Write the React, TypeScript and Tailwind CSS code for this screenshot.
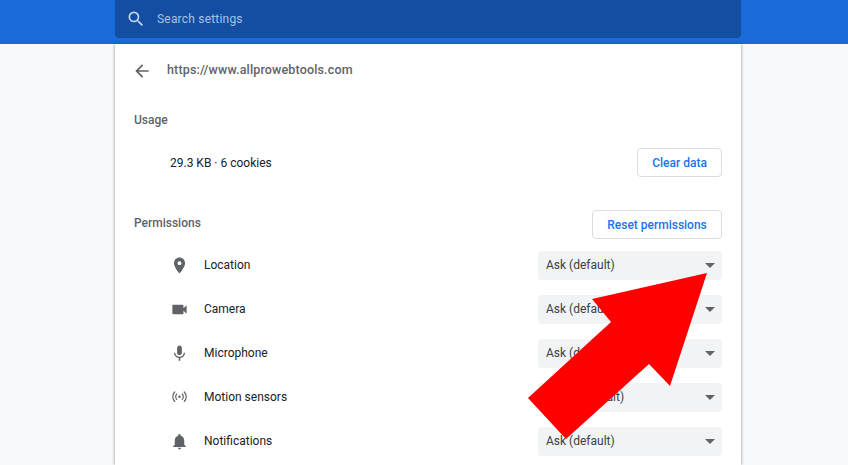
import type { ReactNode } from "react";

const rows: { label: string; value: string; icon: ReactNode }[] = [
  {
    label: "Location",
    value: "Ask (default)",
    icon: <path d="M12 2C8.13 2 5 5.13 5 9c0 5.25 7 13 7 13s7-7.75 7-13c0-3.87-3.13-7-7-7zm0 9.5a2.5 2.5 0 0 1 0-5 2.5 2.5 0 0 1 0 5z" />,
  },
  {
    label: "Camera",
    value: "Ask (default)",
    icon: <path d="M17 10.5V7c0-.55-.45-1-1-1H4c-.55 0-1 .45-1 1v10c0 .55.45 1 1 1h12c.55 0 1-.45 1-1v-3.5l4 4v-11l-4 4z" />,
  },
  {
    label: "Microphone",
    value: "Ask (default)",
    icon: <path d="M12 14c1.66 0 2.99-1.34 2.99-3L15 5c0-1.66-1.34-3-3-3S9 3.34 9 5v6c0 1.66 1.34 3 3 3zm5.3-3c0 3-2.54 5.1-5.3 5.1S6.7 14 6.7 11H5c0 3.41 2.72 6.23 6 6.72V21h2v-3.28c3.28-.48 6-3.3 6-6.72h-1.7z" />,
  },
  {
    label: "Motion sensors",
    value: "Allow (default)",
    icon: (
      <g fill="none" stroke="currentColor" strokeWidth="1.5" strokeLinecap="round">
        <circle cx="12" cy="11" r="1.6" fill="currentColor" stroke="none" />
        <path d="M8.6 7.6a4.8 4.8 0 0 0 0 6.8M15.4 7.6a4.8 4.8 0 0 1 0 6.8" />
        <path d="M6 5a8.5 8.5 0 0 0 0 12M18 5a8.5 8.5 0 0 1 0 12" />
      </g>
    ),
  },
  {
    label: "Notifications",
    value: "Ask (default)",
    icon: <path d="M12 22c1.1 0 2-.9 2-2h-4c0 1.1.89 2 2 2zm6-6v-5c0-3.07-1.64-5.64-4.5-6.32V4c0-.83-.67-1.5-1.5-1.5s-1.5.67-1.5 1.5v.68C7.63 5.36 6 7.92 6 11v5l-2 2v1h16v-1l-2-2z" />,
  },
];

function OutlineButton({ children, width }: { children: ReactNode; width: string }) {
  return (
    <button className={`${width} h-[29px] rounded border border-[#dadce0] bg-white text-[12px] font-medium text-[#1a73e8]`}>
      {children}
    </button>
  );
}

function PermissionRow({ label, value, icon }: { label: string; value: string; icon: ReactNode }) {
  return (
    <div className="flex h-[44px] items-center pl-[36px]">
      <svg viewBox="0 0 24 24" fill="currentColor" className="h-[19px] w-[19px] text-[#5f6368]">
        {icon}
      </svg>
      <span className="ml-[15px] flex-1 text-[12px] text-[#202124]">{label}</span>
      <div className="flex h-[29px] w-[184px] items-center justify-between rounded bg-[#f1f3f4] pl-[8px] pr-[6px] text-[12px] text-[#3c4043]">
        {value}
        <span className="mr-[1px] h-0 w-0 border-x-[5px] border-t-[5px] border-x-transparent border-t-[#5f6368]" />
      </div>
    </div>
  );
}

export default function App() {
  return (
    <div className="relative h-[465px] w-[848px] overflow-hidden bg-[#f8f9fa] font-['Roboto',sans-serif]">
      <header className="h-[44px] bg-[#1a6ad9] pl-[115px]">
        <div className="flex h-[38px] w-[626px] items-center rounded-b-sm bg-[#144ea3] pl-[11px]">
          <svg viewBox="0 0 24 24" fill="currentColor" className="h-[20px] w-[20px] text-[#c5d6f0]">
            <path d="M15.5 14h-.79l-.28-.27A6.471 6.471 0 0 0 16 9.5 6.5 6.5 0 1 0 9.5 16c1.61 0 3.09-.59 4.23-1.57l.27.28v.79l5 4.99L20.49 19l-4.99-5zm-6 0C7.01 14 5 11.99 5 9.5S7.01 5 9.5 5 14 7.01 14 9.5 11.99 14 9.5 14z" />
          </svg>
          <span className="ml-[11px] text-[12px] tracking-[0.2px] text-[#a9c1e6]">Search settings</span>
        </div>
      </header>

      <main className="ml-[115px] h-[421px] w-[626px] bg-white px-[19px] shadow-[0_0_3px_rgba(60,64,67,0.6)]">
        <div className="flex h-[53px] items-center">
          <svg viewBox="0 0 24 24" fill="currentColor" className="-ml-[2px] h-[20px] w-[20px] text-[#5f6368]">
            <path d="M20 11H7.83l5.59-5.59L12 4l-8 8 8 8 1.41-1.41L7.83 13H20v-2z" />
          </svg>
          <span className="ml-[15px] text-[12.5px] font-medium tracking-[0.15px] text-[#5f6368]">https://www.allprowebtools.com</span>
        </div>

        <div className="mt-[14px] text-[12px] font-medium text-[#5f6368]">Usage</div>

        <div className="mt-[19px] flex h-[29px] items-center justify-between pl-[36px]">
          <span className="text-[12px] text-[#202124]">29.3 KB · 6 cookies</span>
          <OutlineButton width="w-[85px]">Clear data</OutlineButton>
        </div>

        <div className="mt-[33px] flex h-[29px] items-center justify-between">
          <span className="-mt-[4px] text-[12px] font-medium text-[#5f6368]">Permissions</span>
          <OutlineButton width="w-[130px]">Reset permissions</OutlineButton>
        </div>

        <div className="mt-[4px]">
          {rows.map((r) => (
            <PermissionRow key={r.label} label={r.label} value={r.value} icon={r.icon} />
          ))}
        </div>
      </main>

      {/* big red arrow over the page */}
      <svg viewBox="0 0 848 465" className="absolute inset-0 h-[465px] w-[848px]">
        <polygon fill="#ff0000" points="707,273 592,299 611,322 528,398 566,439 649,364 670,386" />
      </svg>
    </div>
  );
}
